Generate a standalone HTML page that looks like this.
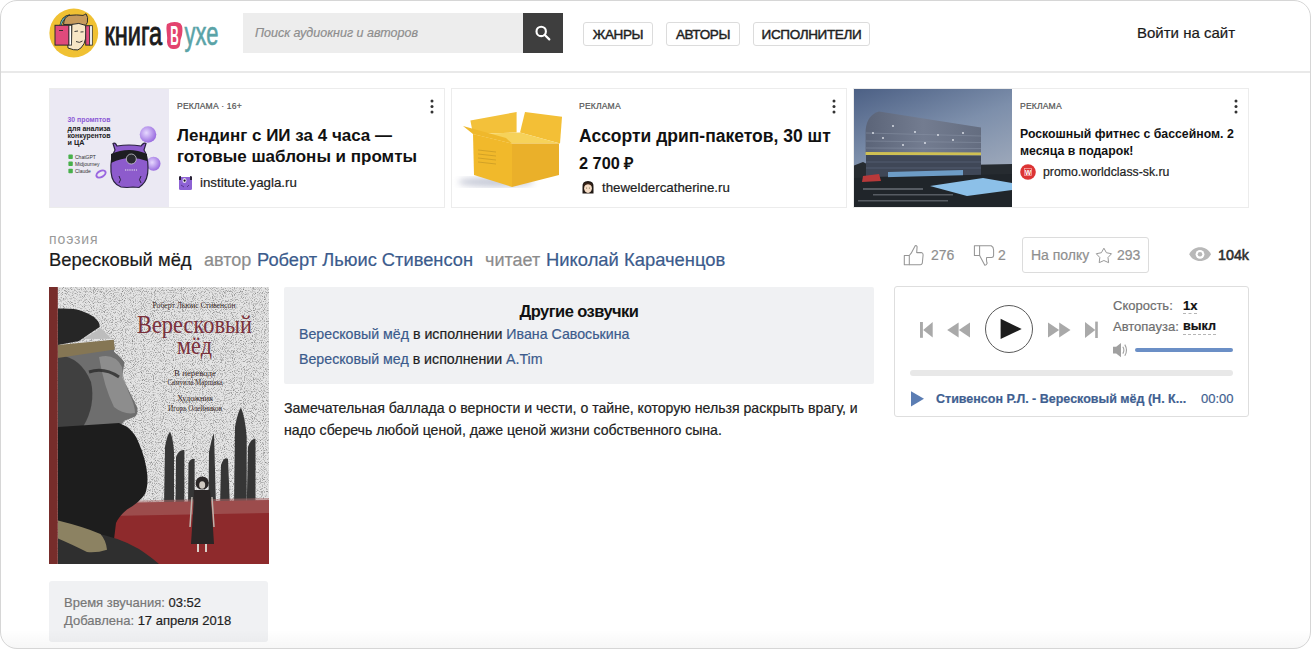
<!DOCTYPE html>
<html><head><meta charset="utf-8">
<style>
*{margin:0;padding:0;box-sizing:border-box}
html,body{width:1311px;height:649px;overflow:hidden;background:#fff}
body{font-family:"Liberation Sans",sans-serif;color:#222;position:relative;-webkit-text-stroke:0.2px}
.a{position:absolute;white-space:nowrap}
#frame{position:absolute;left:0;top:0;width:1311px;height:649px;border:1.5px solid #d6d6d6;border-radius:17px;pointer-events:none;z-index:50}
#hdr{position:absolute;left:0;top:71px;width:1311px;height:2px;background:#e9e9e9}
.btn{position:absolute;top:22px;height:24px;border:1px solid #dcdcdc;border-radius:3px;font-size:13.5px;color:#1e1e1e;line-height:24px;text-align:center;letter-spacing:-0.35px;-webkit-text-stroke:0.45px #1e1e1e}
.ad{position:absolute;top:88px;height:120px;width:396px;border:1px solid #ececec;overflow:hidden}
.lnk{color:#3b5b8c}
.gr{color:#8a8a8a}
</style></head><body>
<div id="frame"></div>
<div class="a" style="left:0;top:630px;width:1311px;height:19px;background:linear-gradient(rgba(0,0,0,0),rgba(0,0,0,0.035));z-index:40;border-radius:0 0 17px 17px"></div>
<div id="hdr"></div>

<!-- logo -->
<svg id="logo" class="a" style="left:46px;top:5px" width="180" height="56" viewBox="0 0 180 56">
 <circle cx="27.8" cy="28" r="24.4" fill="#f0c133"/>
 <!-- headphone band -->
 <path d="M14.5,21 Q16,12 24,10.5" fill="none" stroke="#2b2b2b" stroke-width="2.4"/>
 <path d="M14.5,21 Q16,12 24,10.5" fill="none" stroke="#5fb3b9" stroke-width="1.1"/>
 <!-- hair -->
 <path d="M17.5,19.5 Q18,12 23,10.4 Q31,9.5 37,10.4 Q39,9.5 40,8.8 Q42.5,12 41.4,17.3 Q40.5,19.5 39.3,20.3 L25.9,19.4 Z" fill="#c69a5c" stroke="#2b2b2b" stroke-width="1"/>
 <!-- face -->
 <path d="M25.9,19.4 Q33,17 39.3,20.3 Q41,24 40.1,28.5 Q40,34 38,38.8 Q35,44 31.9,44.9 Q28,45.5 22,43 L21.6,38 L25.5,38 Z" fill="#f7e6c6" stroke="#2b2b2b" stroke-width="1"/>
 <path d="M28.5,26.5 L32,26 M34.5,27 L37.5,26.8 M30,36.5 Q33.5,38.5 36.5,36" fill="none" stroke="#2b2b2b" stroke-width="0.9"/>
 <!-- left book -->
 <rect x="9" y="20.3" width="14" height="19.8" fill="#e04a7c" stroke="#2b2b2b" stroke-width="1"/>
 <rect x="23" y="20.3" width="2.6" height="19.8" fill="#fff" stroke="#2b2b2b" stroke-width="0.8"/>
 <path d="M13,25.5 L17,25.5" stroke="#2b2b2b" stroke-width="0.9"/>
 <!-- right book -->
 <rect x="39.7" y="20.7" width="4" height="19.4" fill="#e04a7c" stroke="#2b2b2b" stroke-width="1"/>
 <rect x="43.7" y="20.7" width="2.6" height="19.4" fill="#fff" stroke="#2b2b2b" stroke-width="0.8"/>
 <!-- text -->
 <text x="58.4" y="39.6" font-family="Liberation Sans" font-size="32.5" fill="#1b1b1b" stroke="#1b1b1b" stroke-width="0.9" textLength="57.7" lengthAdjust="spacingAndGlyphs">книга</text>
 <path d="M121,19 Q128,15.5 134.5,18.5 Q137.5,22 136,30 Q134,35 134,40 Q133,44.5 127,44 Q121.5,43.5 121,37 Q121.5,33 120.8,28 Q120,22 121,19 Z" fill="#e3436f"/>
 <text x="124.3" y="39.8" font-family="Liberation Sans" font-weight="bold" font-size="27" fill="#fff" textLength="8.5" lengthAdjust="spacingAndGlyphs">В</text>
 <text x="138.4" y="39.6" font-family="Liberation Sans" font-size="32.5" fill="#5aa3a7" stroke="#5aa3a7" stroke-width="0.6" textLength="34" lengthAdjust="spacingAndGlyphs">ухе</text>
</svg>

<!-- search -->
<div class="a" style="left:243px;top:13px;width:280px;height:40px;background:#ededed"></div>
<div class="a" style="left:255px;top:25px;font-size:12.5px;font-style:italic;color:#8d8d8d;line-height:16px">Поиск аудиокниг и авторов</div>
<div class="a" style="left:523px;top:13px;width:40px;height:40px;background:#3e3e3e"></div>

<div class="btn" style="left:583px;width:70px">ЖАНРЫ</div>
<div class="btn" style="left:666px;width:74px">АВТОРЫ</div>
<div class="btn" style="left:753px;width:117px">ИСПОЛНИТЕЛИ</div>

<div class="a" style="left:1137px;top:25px;font-size:15px;color:#1a1a1a;line-height:16px">Войти на сайт</div>

<!-- ads -->
<div class="ad" style="left:49px">
<svg class="a" style="left:-1px;top:-1px;-webkit-text-stroke:0" width="120" height="120" viewBox="0 0 120 120">
 <defs><radialGradient id="bub" cx="0.4" cy="0.4" r="0.6"><stop offset="0" stop-color="#e6d8ff"/><stop offset="1" stop-color="#9b6ee0"/></radialGradient></defs>
 <rect width="120" height="120" fill="#ebe9f3"/>
 <text x="18.5" y="34" font-family="Liberation Sans" font-weight="bold" font-size="7.2" fill="#8d5ad6" textLength="43" lengthAdjust="spacingAndGlyphs">30 промптов</text>
 <text x="18.5" y="42.5" font-family="Liberation Sans" font-weight="bold" font-size="7.2" fill="#222" textLength="43" lengthAdjust="spacingAndGlyphs">для анализа</text>
 <text x="18.5" y="50" font-family="Liberation Sans" font-weight="bold" font-size="7.2" fill="#222" textLength="43" lengthAdjust="spacingAndGlyphs">конкурентов</text>
 <text x="18.5" y="56.5" font-family="Liberation Sans" font-weight="bold" font-size="7.2" fill="#222">и ЦА</text>
 <g fill="#47b04a"><rect x="19.4" y="66.6" width="4.4" height="4.4" rx="0.8"/><rect x="19.4" y="73.6" width="4.4" height="4.4" rx="0.8"/><rect x="19.4" y="80.8" width="4.4" height="4.4" rx="0.8"/></g>
 <g font-family="Liberation Sans" font-size="5" fill="#333"><text x="26" y="70.8">ChatGPT</text><text x="26" y="77.8">Midjourney</text><text x="26" y="85">Claude</text></g>
 <circle cx="99" cy="46.5" r="8.3" fill="url(#bub)"/>
 <circle cx="104.5" cy="75.8" r="7" fill="url(#bub)"/>
 <ellipse cx="52" cy="86" rx="5" ry="3" fill="none" stroke="#9a66e0" stroke-width="2" transform="rotate(-30 52 86)"/>
 <path d="M66,62 L64,55.5 Q66,54 68,58 Q80,56 92,58 Q95,54 97,55.5 L95,62 Q99,68 99,80 Q99,92 93,97 L90,99.5 L84,99 L78,99.5 L72,99 Q63,96 62,84 Q61,70 66,62 Z" fill="#8d5bcc" stroke="#2b2340" stroke-width="1.2"/>
 <path d="M62,66 Q80,58 98,66 L98,73 Q80,66 62,75 Z" fill="#1d1d22"/>
 <circle cx="82.3" cy="71" r="5" fill="#2a2a30" stroke="#c8c8d0" stroke-width="0.8"/>
 <path d="M76,82 L88,82" stroke="#eee" stroke-width="1.2" stroke-dasharray="1.2 1"/>
 <path d="M70,88 Q73,92 70,95 M92,88 Q89,92 92,95" stroke="#2b2340" stroke-width="1" fill="none"/>
</svg>
<svg class="a" style="left:379px;top:10px" width="6" height="16" viewBox="0 0 6 16"><circle cx="3" cy="2" r="1.5" fill="#333"/><circle cx="3" cy="7.5" r="1.5" fill="#333"/><circle cx="3" cy="13" r="1.5" fill="#333"/></svg>
<div class="a" style="left:127px;top:12.5px;font-size:8.6px;line-height:9px;color:#555;letter-spacing:0.15px">РЕКЛАМА · 16+</div>
<div class="a" style="left:127px;top:36px;font-size:17px;line-height:21px;font-weight:bold;color:#111;-webkit-text-stroke:0">Лендинг с ИИ за 4 часа —<br>готовые шаблоны и промты</div>
<svg class="a" style="left:128px;top:86px" width="15" height="16" viewBox="0 0 15 16"><path d="M1,4 Q1,2 3,2 L12,2 Q14,2 14,4 L14,13.5 Q14,15 12.5,15 L2.5,15 Q1,15 1,13.5 Z" fill="#8d62d4"/><path d="M1,1.5 L3,1 L3,5 L1,5 Z M12,1 L14,1.5 L14,5 L12,5 Z" fill="#2a2238"/><ellipse cx="6.5" cy="5.5" rx="2" ry="2.6" fill="#e8e0f0"/><circle cx="6.6" cy="5.6" r="1.1" fill="#111"/><path d="M3,10 L6,12 M11,10 L9,12" stroke="#5a3a90" stroke-width="1"/></svg>
<div class="a" style="left:150px;top:87px;font-size:13.3px;line-height:14px;color:#222">institute.yagla.ru</div>
</div>

<div class="ad" style="left:451px">
<svg class="a" style="left:-1px;top:-1px;-webkit-text-stroke:0" width="120" height="120" viewBox="0 0 120 120">
 <defs><filter id="blr"><feGaussianBlur stdDeviation="3"/></filter></defs>
 <rect width="120" height="120" fill="#fff"/>
 <ellipse cx="45" cy="94" rx="38" ry="5" fill="#9aa0b8" opacity="0.55" filter="url(#blr)"/>
 <path d="M19.4,32.4 L65.6,24 L65.6,44.4 L22,46 Z" fill="#f3c13a"/>
 <path d="M74,24 L111,28.7 L109,55.5 L69,44.4 Z" fill="#f3bf36"/>
 <path d="M22,46 L69,44.4 L109,55.5 L61,55.5 Z" fill="#f6d25a"/>
 <path d="M12,38 L22,46 L61,55.5 L55,50 Z" fill="#efb82c"/>
 <path d="M22,46 L61,55.5 L61,99 L23,87 Z" fill="#f1b92b"/>
 <path d="M61,55.5 L108,55.5 L108,87 L61,99 Z" fill="#eab02a"/>
 <g stroke="#8a6a1a" stroke-width="0.5" opacity="0.6"><path d="M27,62 L45,64 M27,66 L45,68 M27,70 L45,72 M27,74 L45,76"/></g>
</svg>
<svg class="a" style="left:379px;top:10px" width="6" height="16" viewBox="0 0 6 16"><circle cx="3" cy="2" r="1.5" fill="#333"/><circle cx="3" cy="7.5" r="1.5" fill="#333"/><circle cx="3" cy="13" r="1.5" fill="#333"/></svg>
<div class="a" style="left:127px;top:12.5px;font-size:8.6px;line-height:9px;color:#555;letter-spacing:0.15px">РЕКЛАМА</div>
<div class="a" style="left:127px;top:37.5px;font-size:17.5px;line-height:18px;font-weight:bold;color:#111;-webkit-text-stroke:0">Ассорти дрип-пакетов, 30 шт</div>
<div class="a" style="left:127px;top:66px;font-size:16.3px;line-height:16px;font-weight:bold;color:#111;-webkit-text-stroke:0">2 700 ₽</div>
<svg class="a" style="left:129px;top:90px" width="14" height="16" viewBox="0 0 14 16"><path d="M1.5,8 Q1,2 7,2 Q13,2 12.5,8 L12.5,14.5 L1.5,14.5 Z" fill="#221a16"/><ellipse cx="7" cy="9.3" rx="3.9" ry="4.6" fill="#f5dcc5"/><path d="M3,7 Q7,3.5 11,7 L11,5 Q7,2.5 3,5 Z" fill="#3a2418"/><circle cx="5.6" cy="9" r="0.5" fill="#553"/><circle cx="8.4" cy="9" r="0.5" fill="#553"/></svg>
<div class="a" style="left:150px;top:91.5px;font-size:13.3px;line-height:14px;color:#222">thewelderсatherine.ru</div>
</div>

<div class="ad" style="left:853px">
<svg class="a" style="left:-1px;top:-1px" width="159" height="120" viewBox="0 0 159 120">
 <defs>
  <linearGradient id="sky" x1="0" y1="0" x2="0.5" y2="1"><stop offset="0" stop-color="#4b5f84"/><stop offset="0.5" stop-color="#7d8fab"/><stop offset="1" stop-color="#a3adbd"/></linearGradient>
  <linearGradient id="gls" x1="0" y1="0" x2="1" y2="0"><stop offset="0" stop-color="#5b6478"/><stop offset="0.5" stop-color="#737c90"/><stop offset="1" stop-color="#646d80"/></linearGradient>
 </defs>
 <rect width="159" height="120" fill="url(#sky)"/>
 <path d="M0,78 L10,74 L20,79 L159,76 L159,120 L0,120 Z" fill="#262b30"/>
 <path d="M12.6,42 Q14,27 26,23.6 L128,39.5 L128,64.8 L12.6,64.8 Z" fill="url(#gls)"/>
 <g stroke="#8791a3" stroke-width="0.7" opacity="0.8"><path d="M13,45 L128,48 M13,53 L128,54.5 M13,60 L128,60.5"/></g>
 <g fill="#f0f4fa" opacity="0.9"><circle cx="40" cy="38" r="0.9"/><circle cx="62" cy="44" r="0.9"/><circle cx="85" cy="47" r="0.9"/><circle cx="50" cy="57" r="0.9"/><circle cx="100" cy="52" r="0.9"/><circle cx="30" cy="50" r="0.9"/><circle cx="110" cy="45" r="0.9"/><circle cx="72" cy="55" r="0.9"/><circle cx="20" cy="45" r="0.9"/></g>
 <path d="M12.6,64 L128,64.5 L128,67.5 L12.6,67 Z" fill="#cfc053"/>
 <path d="M13,67 L128,67.5 L128,87 L13,89 Z" fill="#3f4757"/>
 <g stroke="#6d7b90" stroke-width="0.6" opacity="0.7"><path d="M13,74 L128,74 M13,80 L128,80"/></g>
 <path d="M35,84 L110,82 L110,90 L35,93 Z" fill="#6d9cc6"/>
 <path d="M0,90 L159,86 L159,120 L0,120 Z" fill="#20252a"/>
 <path d="M77,98 L130,90 L159,95 L159,102 L114,108 Z" fill="#8cc0e8"/>
 <path d="M10,88 L26,86 L28,93 L9,94 Z" fill="#b8393a"/>
 <g fill="#7a8088" opacity="0.6"><rect x="10" y="100" width="60" height="2"/><rect x="20" y="106" width="80" height="1.5"/><rect x="5" y="112" width="90" height="1.5"/></g>
</svg>
<svg class="a" style="left:379px;top:10px" width="6" height="16" viewBox="0 0 6 16"><circle cx="3" cy="2" r="1.5" fill="#333"/><circle cx="3" cy="7.5" r="1.5" fill="#333"/><circle cx="3" cy="13" r="1.5" fill="#333"/></svg>
<div class="a" style="left:166px;top:12.5px;font-size:8.6px;line-height:9px;color:#555;letter-spacing:0.15px">РЕКЛАМА</div>
<div class="a" style="left:166px;top:37px;font-size:12.3px;line-height:17px;font-weight:bold;color:#111;-webkit-text-stroke:0">Роскошный фитнес с бассейном. 2<br>месяца в подарок!</div>
<svg class="a" style="left:166px;top:75px" width="16" height="16" viewBox="0 0 16 16"><circle cx="8" cy="8" r="7.8" fill="#dc3434"/><rect x="4.6" y="4.6" width="6.8" height="6.8" fill="none" stroke="#f7b0b0" stroke-width="0.7"/><text x="8" y="10.6" font-family="Liberation Sans" font-weight="bold" font-size="6.5" fill="#fff" text-anchor="middle" style="-webkit-text-stroke:0">W</text></svg>
<div class="a" style="left:189px;top:77px;font-size:12.3px;line-height:13px;color:#222">promo.worldclass-sk.ru</div>
</div>



<!-- title -->
<div class="a gr" style="left:49px;top:232px;font-size:14px;line-height:14px;letter-spacing:0.9px;color:#9a9a9a;-webkit-text-stroke:0">поэзия</div>
<div class="a" style="left:49px;top:250.5px;font-size:18.4px;line-height:18px;color:#1b1b1b">Вересковый мёд</div>
<div class="a" style="left:204px;top:250.5px;font-size:18px;line-height:18px;color:#8c8c8c">автор</div>
<div class="a lnk" style="left:257px;top:250.5px;font-size:18.3px;line-height:18px">Роберт Льюис Стивенсон</div>
<div class="a" style="left:485px;top:250.5px;font-size:18px;line-height:18px;color:#8c8c8c">читает</div>
<div class="a lnk" style="left:546px;top:250.5px;font-size:18.4px;line-height:18px">Николай Караченцов</div>

<!-- rating -->
<div class="a" style="left:931px;top:248px;font-size:14px;line-height:14px;color:#8f8f8f">276</div>
<div class="a" style="left:998px;top:248px;font-size:14px;line-height:14px;color:#8f8f8f">2</div>
<div class="a" style="left:1022px;top:237px;width:127px;height:36px;border:1px solid #dcdcdc;border-radius:3px"></div>
<div class="a" style="left:1031px;top:248px;font-size:14px;line-height:14px;color:#8f8f8f">На полку</div>
<div class="a" style="left:1117px;top:248px;font-size:14px;line-height:14px;color:#8f8f8f">293</div>
<div class="a" style="left:1218px;top:248px;font-size:14.3px;line-height:14px;color:#2e2e2e;-webkit-text-stroke:0.55px #2e2e2e">104k</div>

<!-- cover -->
<div id="cover" class="a" style="left:49px;top:287px;width:220px;height:277px;overflow:hidden">
<svg width="220" height="277" viewBox="0 0 220 277" style="-webkit-text-stroke:0">
 <defs>
  <filter id="spk" x="0" y="0" width="100%" height="100%">
   <feTurbulence type="fractalNoise" baseFrequency="1.1" numOctaves="1" seed="5" result="n"/>
   <feColorMatrix in="n" type="matrix" values="0 0 0 0 0  0 0 0 0 0  0 0 0 0 0  0 0 0 -3 1.55" result="m"/>
   <feComposite in="m" in2="SourceGraphic" operator="in"/>
  </filter>
 </defs>
 <rect width="220" height="277" fill="#e4e4e4"/>
 <rect width="220" height="277" fill="#555" filter="url(#spk)" opacity="0.45"/>
 <!-- stones -->
 <g fill="#363636">
  <path d="M115,220 L116,160 Q118,148 121,144.8 Q124,150 125,165 L125,220 Z"/>
  <path d="M126.5,220 L127,170 Q130,162 135.4,163 L135.4,220 Z"/>
  <path d="M139,220 L139.5,176 Q142,171 145.6,172 L145.6,220 Z"/>
  <path d="M159.5,220 L160,165 Q163,150 165,146 L167,220 Z"/>
  <path d="M171,220 L172,178 Q175,169 179,172 L181,220 Z"/>
  <path d="M185,220 L186,140 Q189,124 192,120.6 Q196,130 197.7,150 L197.7,220 Z"/>
  <path d="M197.7,220 L199,160 Q202,151 206.5,152 L206.5,220 Z"/>
 </g>
 <!-- red ground -->
 <path d="M60,216 L220,213 L220,277 L60,277 Z" fill="#8e2a2c"/>
 <path d="M60,214 L220,211 L220,226 L60,229 Z" fill="#a86868" opacity="0.55"/>
 <!-- child -->
 <g fill="#2a2626">
  <circle cx="153.2" cy="196" r="6.6"/>
  <path d="M145,203 L161,203 L163,226 L165,257 L142,257 L144,226 Z"/>
 </g>
 <ellipse cx="153.2" cy="198" rx="3" ry="3.8" fill="#cfc8c0"/>
 <path d="M143,210 L141,240 M163,210 L165,240" stroke="#bdb4ac" stroke-width="1.5"/>
 <rect x="148" y="257" width="2" height="8" fill="#d8d0c8"/>
 <rect x="156" y="257" width="2" height="8" fill="#d8d0c8"/>
 <!-- man: face -->
 <path d="M9,60 L64.7,53 Q66,62 65,65 Q72,70 75.5,75.5 Q74,84 73.3,90.6 Q80,104 88.4,120.8 Q89,127 86.3,129.4 Q80,132 75.5,133.7 L70,140 L9,145 Z" fill="#6e6e6e"/>
 <path d="M50,70 Q66,66 73,80 Q74,92 80,106 Q86,118 86,126 Q75,128 65,120 Q55,100 50,70 Z" fill="#9a9a9a" opacity="0.7"/>
 <path d="M9,68 Q32,70 42,95 Q47,118 34,140 L9,145 Z" fill="#383838" opacity="0.85"/>
 <path d="M40,85 Q55,80 70,90" stroke="#2a2a2a" stroke-width="3" fill="none" opacity="0.8"/>
 <!-- forehead skin -->
 <path d="M34,52 L52,41 L62.5,51.8 Z" fill="#bdbdbd"/>
 <!-- hair -->
 <path d="M9,21.6 Q25,21 32,23.7 Q44,28 47.5,32.4 Q51,36 50.7,40 Q40,47 30,54 L9,58 Z" fill="#262626"/>
 <!-- beard -->
 <path d="M9,140 L70,136 L78,139.7 Q86,146 89.4,155 Q97,172 98.4,189 Q99,200 96,207 Q90,216 78,222.4 Q70,229 67,236 L62,277 L9,277 Z" fill="#1d1d1d"/>
 <!-- clothing -->
 <path d="M40,245 Q70,250 90,262 Q102,270 110,277 L9,277 L9,250 Z" fill="#2f2f2f"/>
 <!-- headband -->
 <path d="M8.6,58 L64.7,52.8 L65.8,62.5 L8.6,71 Z" fill="#857654"/>
 <!-- rope -->
 <path d="M9,233.6 Q35,240 51.4,247 Q57,253 58,262.7 Q48,266 38,265 Q22,257 9,251.5 Z" fill="#8c8262"/>
 <!-- spine -->
 <rect x="0" y="0" width="8.8" height="277" fill="#772d2b"/>
 <!-- texts -->
 <text x="145" y="21" font-family="Liberation Serif" font-size="7.5" fill="#3a2a2a" text-anchor="middle" textLength="83" lengthAdjust="spacingAndGlyphs">Роберт Льюис Стивенсон</text>
 <text x="145.5" y="46" font-family="Liberation Serif" font-size="25" fill="#7a303b" text-anchor="middle" textLength="115" lengthAdjust="spacingAndGlyphs">Вересковый</text>
 <text x="145.5" y="67" font-family="Liberation Serif" font-size="25" fill="#7a303b" text-anchor="middle" textLength="35" lengthAdjust="spacingAndGlyphs">мёд</text>
 <text x="146" y="89" font-family="Liberation Serif" font-size="7.5" fill="#3a2a2a" text-anchor="middle" textLength="42" lengthAdjust="spacingAndGlyphs">В переводе</text>
 <text x="146" y="98" font-family="Liberation Serif" font-size="7.5" fill="#3a2a2a" text-anchor="middle" textLength="55" lengthAdjust="spacingAndGlyphs">Самуила Маршака</text>
 <text x="146" y="114" font-family="Liberation Serif" font-size="7.5" fill="#3a2a2a" text-anchor="middle" textLength="36" lengthAdjust="spacingAndGlyphs">Художник</text>
 <text x="146" y="124" font-family="Liberation Serif" font-size="7.5" fill="#3a2a2a" text-anchor="middle" textLength="54" lengthAdjust="spacingAndGlyphs">Игорь Олейников</text>
</svg></div>

<!-- info -->
<div class="a" style="left:49px;top:581px;width:219px;height:61px;background:#f0f1f3;border-radius:3px"></div>
<div class="a" style="left:64px;top:596px;font-size:13px;line-height:13px;color:#777">Время звучания: <span style="color:#1e1e1e">03:52</span></div>
<div class="a" style="left:64px;top:614px;font-size:13px;line-height:13px;color:#777">Добавлена: <span style="color:#1e1e1e">17 апреля 2018</span></div>

<!-- other voices -->
<div class="a" style="left:284px;top:287px;width:590px;height:97px;background:#f0f1f3;border-radius:2px"></div>
<div class="a" style="left:284px;width:590px;text-align:center;top:302.5px;font-size:16.5px;line-height:16px;font-weight:bold;color:#111;letter-spacing:-0.55px;-webkit-text-stroke:0">Другие озвучки</div>
<div class="a" style="left:299px;top:327px;font-size:14.2px;line-height:14px;color:#1e1e1e"><span class="lnk">Вересковый мёд</span> в исполнении <span class="lnk">Ивана Савоськина</span></div>
<div class="a" style="left:299px;top:352px;font-size:14.2px;line-height:14px;color:#1e1e1e"><span class="lnk">Вересковый мед</span> в исполнении <span class="lnk">A.Tim</span></div>

<!-- description -->
<div class="a" style="left:284px;top:397px;font-size:14.1px;line-height:22px;color:#222;white-space:normal;width:590px">Замечательная баллада о верности и чести, о тайне, которую нельзя раскрыть врагу, и надо сберечь любой ценой, даже ценой жизни собственного сына.</div>

<!-- player -->
<div class="a" style="left:894px;top:286px;width:355px;height:131px;border:1px solid #dedede;border-radius:3px"></div>
<div class="a" style="left:985px;top:305px;width:48px;height:48px;border:1px solid #5a5a5a;border-radius:50%"></div>
<div class="a" style="left:1113px;top:299px;font-size:13px;line-height:13px;color:#6e6e6e">Скорость:</div>
<div class="a" style="left:1183px;top:299px;font-size:13px;line-height:13px;padding-bottom:1px;color:#111;font-weight:bold;border-bottom:1px dashed #b5b5b5">1x</div>
<div class="a" style="left:1113px;top:320px;font-size:13px;line-height:13px;color:#6e6e6e">Автопауза:</div>
<div class="a" style="left:1183px;top:320px;font-size:12.6px;line-height:13px;padding-bottom:1px;color:#111;font-weight:bold;border-bottom:1px dashed #b5b5b5">выкл</div>
<div class="a" style="left:1135px;top:348px;width:98px;height:4px;background:#6b8fc6;border-radius:2px"></div>
<div class="a" style="left:910px;top:370px;width:323px;height:6px;background:#e8e8e8;border-radius:3px"></div>
<div class="a" style="left:936px;top:393px;font-size:12.5px;line-height:13px;color:#3f5f91;font-weight:bold">Стивенсон Р.Л. - Вересковый мёд (Н. К...</div>
<div class="a" style="left:1201px;top:392px;font-size:13px;line-height:13px;color:#3f5f91">00:00</div>


<svg class="a" style="left:0;top:0;z-index:5" width="1311" height="649" viewBox="0 0 1311 649">
 <!-- search icon -->
 <circle cx="541.2" cy="31.4" r="4.7" fill="none" stroke="#fff" stroke-width="2.1"/>
 <line x1="544.6" y1="34.8" x2="549.3" y2="39.4" stroke="#fff" stroke-width="2.2" stroke-linecap="round"/>
 <!-- thumb up -->
 <g fill="none" stroke="#959595" stroke-width="1.05" stroke-linejoin="round">
  <rect x="904.3" y="255.5" width="5" height="9.3"/>
  <path d="M909.3,255.5 L911.2,253.2 L915.2,245.8 Q916.6,245.2 917.1,246.6 L916.7,252.6 L921.4,252.6 Q923.2,253 923.1,255 L922.3,263.2 Q921.9,264.8 920.3,264.8 L909.3,264.8"/>
  <rect x="974.4" y="245.8" width="5.2" height="9.6"/>
  <path d="M979.6,245.8 L991.2,245.8 Q993.6,247 993.6,250 L993.6,255.6 Q993.4,257.4 991.6,257.5 L986.6,257.6 Q986.2,261 987.2,263.2 Q986.5,265.4 984.8,265.2 L979.6,255.4"/>
  <!-- star -->
  <path d="M1103.90,248.20 L1106.43,252.72 L1111.51,253.73 L1107.99,257.53 L1108.60,262.67 L1103.90,260.50 L1099.20,262.67 L1099.81,257.53 L1096.29,253.73 L1101.37,252.72 Z" stroke="#999" stroke-width="1"/>
 </g>
 <!-- eye -->
 <path d="M1189.2,254.2 C1191.5,249.5 1195.5,247.2 1200.1,247.2 C1204.7,247.2 1208.7,249.5 1211,254.2 C1208.7,258.7 1204.7,261 1200.1,261 C1195.5,261 1191.5,258.7 1189.2,254.2 Z" fill="#b8b8b8"/>
 <circle cx="1200" cy="254.3" r="4.4" fill="#fff"/>
 <circle cx="1200" cy="254.3" r="2.3" fill="#b8b8b8"/>

 <!-- player icons -->
 <g fill="#a9a9a9">
  <rect x="920" y="322" width="2.9" height="15.8"/>
  <path d="M923.2,330 L932.7,322 L932.7,337.6 Z"/>
  <path d="M947.2,330 L958.6,322.4 L958.6,337.4 Z"/>
  <path d="M958.8,330 L970,322.4 L970,337.4 Z"/>
  <path d="M1048,322.4 L1059.2,330 L1048,337.6 Z"/>
  <path d="M1059.2,322.4 L1070.5,330 L1059.2,337.6 Z"/>
  <path d="M1085,322 L1095.3,330 L1085,338 Z"/>
  <rect x="1095.2" y="321.6" width="2.6" height="16.4"/>
  <!-- speaker -->
  <path d="M1113,346.7 L1116.2,346.7 L1121,343 L1121,357.3 L1116.2,353.5 L1113,353.5 Z" fill="#a0a0a0"/>
 </g>
 <path d="M1122.8,346.8 Q1125,350.2 1122.8,353.6" fill="none" stroke="#a0a0a0" stroke-width="1.1"/>
 <path d="M1124.8,344.6 Q1128.2,350.2 1124.8,355.8" fill="none" stroke="#a0a0a0" stroke-width="1.1"/>
 <!-- big play -->
 <path d="M1000.6,318.8 L1021.7,329 L1000.6,338.9 Z" fill="#1d1d1d"/>
 <!-- small play -->
 <path d="M911,391.2 L924,398.8 L911,406.5 Z" fill="#5b7db3"/>
</svg>

</body></html>
